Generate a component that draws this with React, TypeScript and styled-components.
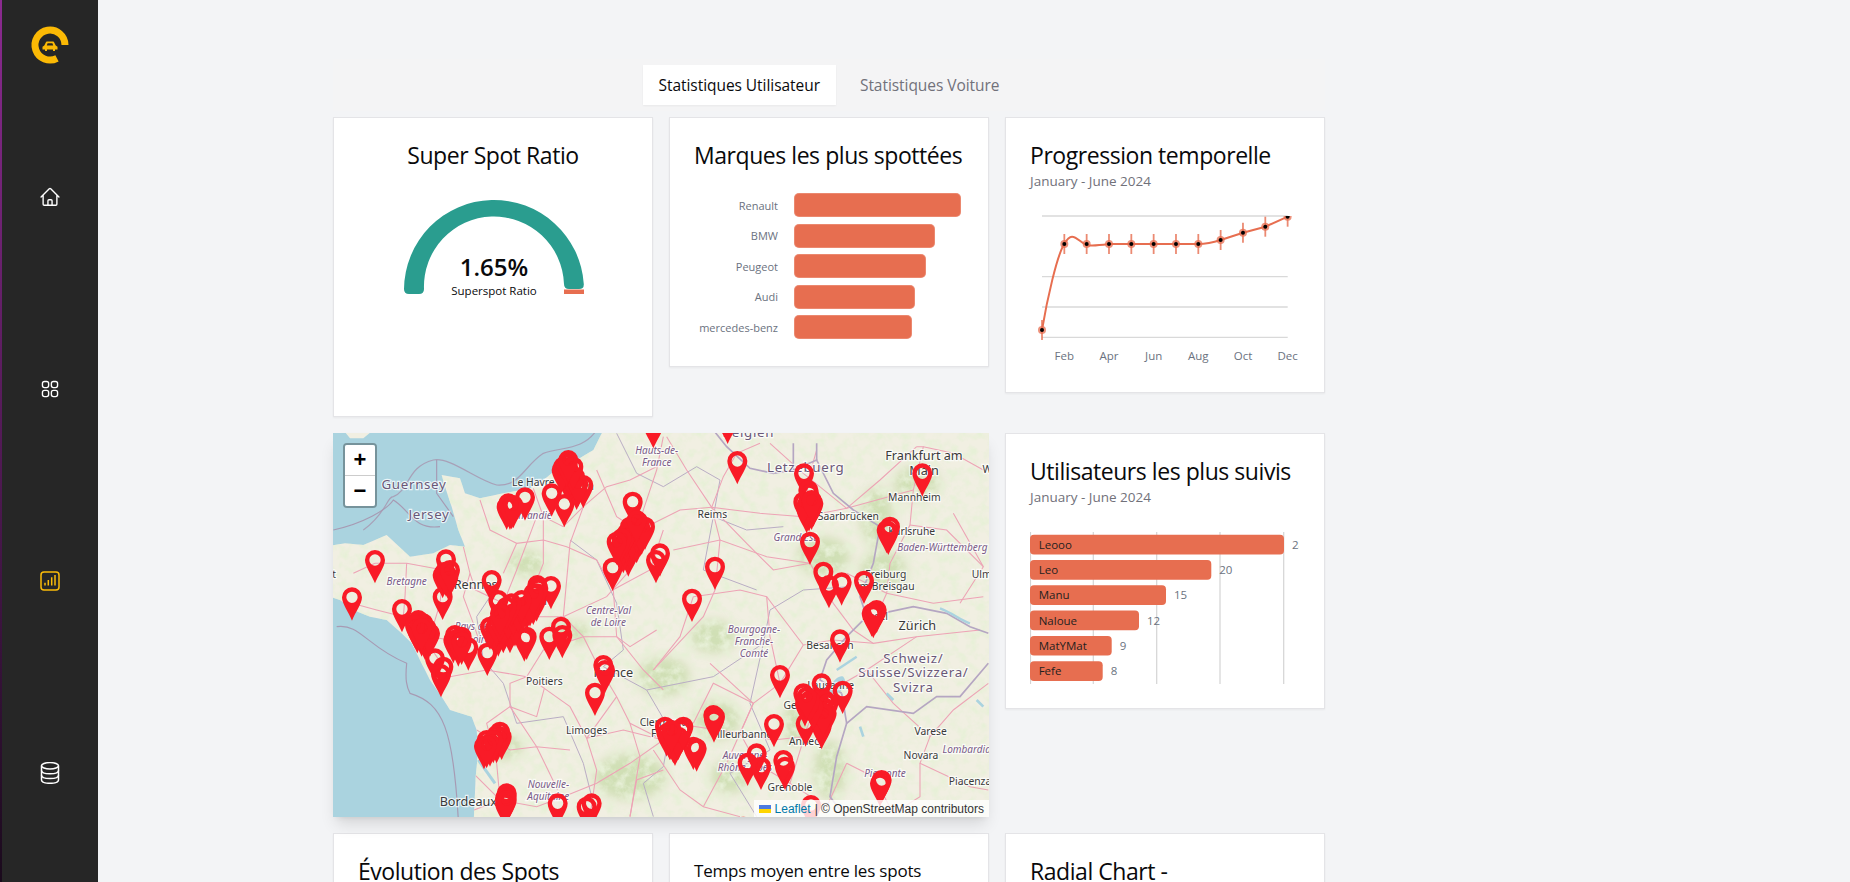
import React from 'react';
import styled, { createGlobalStyle } from 'styled-components';
import { HiOutlineHome, HiOutlineSquares2X2 } from 'react-icons/hi2';

const GlobalStyle = createGlobalStyle`
  html, body {
    margin: 0;
    height: 100%;
    overflow: hidden;
    background: #f3f4f6;
    font-family: "Open Sans", "Noto Sans", sans-serif;
    color: #09090b;
  }
  #root { height: 100%; }
`;

const Page = styled.div`
  display: flex;
  height: 100vh;
  overflow: hidden;
`;

const Sidebar = styled.aside`
  flex: none;
  width: 96px;
  display: flex;
  flex-direction: column;
  align-items: center;
  background: #262626;
  border-left: 2px solid;
  border-image: linear-gradient(#8b2a90, #1a0a1c) 1;
`;

const Logo = styled.svg`
  width: 44px;
  height: 44px;
  margin-top: 23px;
`;

const Nav = styled.nav`
  display: flex;
  flex-direction: column;
  align-items: center;
  gap: 170px;
  margin-top: 119px;
`;

const NavItem = styled.span<{ $active?: boolean }>`
  display: flex;
  width: 22px;
  height: 22px;
  color: ${(p) => (p.$active ? '#fbbc09' : '#ffffff')};
  svg {
    width: 22px;
    height: 22px;
  }
`;

const Main = styled.main`
  flex: 1;
  padding: 59px 0 0 235px;
`;

const Container = styled.div`
  width: 992px;
`;

const TabList = styled.div`
  display: flex;
  justify-content: center;
  gap: 8px;
  padding: 6px;
  margin-bottom: 6px;
  background: #f4f4f5;
`;

const Tab = styled.div<{ $active?: boolean }>`
  padding: 0 16px;
  height: 40px;
  line-height: 40px;
  font-size: 15.5px;
  font-weight: 500;
  letter-spacing: -0.05px;
  color: ${(p) => (p.$active ? '#09090b' : '#71717a')};
  background: ${(p) => (p.$active ? '#ffffff' : 'transparent')};
  box-shadow: ${(p) => (p.$active ? '0 1px 2px rgba(0,0,0,.05)' : 'none')};
`;

const Grid = styled.div`
  display: grid;
  grid-template-columns: repeat(3, 320px);
  gap: 16px;
  align-items: start;
`;

const Card = styled.section<{ $minHeight?: number; $center?: boolean }>`
  box-sizing: border-box;
  min-height: ${(p) => (p.$minHeight ? `${p.$minHeight}px` : 'auto')};
  padding: 24px 24px 22px;
  background: #ffffff;
  border: 1px solid #e4e4e7;
  box-shadow: 0 1px 2px rgba(0, 0, 0, 0.05);
  text-align: ${(p) => (p.$center ? 'center' : 'left')};
`;

const Title = styled.h2<{ $small?: boolean }>`
  margin: -1px 0 1px;
  font-size: ${(p) => (p.$small ? '17px' : '23px')};
  letter-spacing: ${(p) => (p.$small ? '-0.2px' : '-0.45px')};
  line-height: 28px;
  font-weight: 500;
  white-space: nowrap;
`;

const Subtitle = styled.div`
  margin-top: 2px;
  font-size: 13.5px;
  line-height: 20px;
  color: #71717a;
`;

const GaugeSvg = styled.svg`
  display: block;
  margin: 10px auto 0;
`;

const BrandBars = styled.div`
  display: flex;
  flex-direction: column;
  gap: 6.5px;
  margin-top: 24px;
  margin-bottom: 5px;
`;

const BrandRow = styled.div`
  display: flex;
  align-items: center;
  gap: 16px;
`;

const BrandLabel = styled.span`
  width: 84px;
  text-align: right;
  font-size: 11px;
  color: #6b7280;
  white-space: nowrap;
`;

const BrandBar = styled.span<{ $width: number }>`
  width: ${(p) => p.$width}px;
  height: 24px;
  border-radius: 5px;
  background: #e76e50;
  box-shadow: inset 0 0 0 1px rgba(255, 255, 255, 0.18);
`;

const ChartSvg = styled.svg`
  display: block;
  margin-top: 19px;
  overflow: hidden;
`;

const AxisText = styled.text`
  font-size: 11.5px;
  fill: #6b7280;
`;

const MapCard = styled.section`
  position: relative;
  grid-column: span 2;
  height: 384px;
  overflow: hidden;
  background: #aad3df;
  box-shadow: 0 10px 15px -3px rgba(0, 0, 0, 0.12), 0 4px 6px -4px rgba(0, 0, 0, 0.1);
`;

const MapSvg = styled.svg`
  display: block;
`;

const MapLabel = styled.text<{ $kind?: 'city' | 'region' | 'country' | 'big' }>`
  font-family: "Noto Sans", "Open Sans", sans-serif;
  font-size: ${(p) => (p.$kind === 'country' ? 40 : p.$kind === 'big' ? 38 : p.$kind === 'region' ? 30 : 31)}px;
  font-style: ${(p) => (p.$kind === 'region' ? 'italic' : 'normal')};
  letter-spacing: ${(p) => (p.$kind === 'country' ? 2 : 0)}px;
  fill: ${(p) => (p.$kind === 'region' ? '#7a5c88' : p.$kind === 'country' ? '#6a5878' : '#3a3a3a')};
  stroke: rgba(255, 255, 255, 0.75);
  stroke-width: 7px;
  paint-order: stroke;
  text-anchor: middle;
`;

const ZoomControl = styled.div`
  position: absolute;
  top: 10px;
  left: 10px;
  border: 2px solid rgba(0, 0, 0, 0.3);
  border-radius: 4px;
`;

const ZoomButton = styled.div<{ $last?: boolean }>`
  width: 30px;
  height: 30px;
  line-height: 30px;
  text-align: center;
  font-family: "Liberation Sans", Arial, sans-serif;
  font-size: 22px;
  font-weight: 700;
  color: #000;
  background: #fff;
  border-bottom: ${(p) => (p.$last ? 'none' : '1px solid #ccc')};
  border-radius: ${(p) => (p.$last ? '0 0 2px 2px' : '2px 2px 0 0')};
`;

const Attribution = styled.div`
  position: absolute;
  right: 0;
  bottom: 0;
  display: flex;
  align-items: center;
  gap: 4px;
  height: 17px;
  padding: 0 5px;
  font-family: "Liberation Sans", Arial, sans-serif;
  font-size: 12px;
  color: #333;
  background: rgba(255, 255, 255, 0.8);
`;

const LeafletLink = styled.span`
  color: #0078a8;
`;

const CORAL = '#e76e50';

const brands = [
  { name: 'Renault', width: 167 },
  { name: 'BMW', width: 141 },
  { name: 'Peugeot', width: 132 },
  { name: 'Audi', width: 121 },
  { name: 'mercedes-benz', width: 118 },
];

const followed = [
  { name: 'Leooo', end: 254, value: 28 },
  { name: 'Leo', end: 181.3, value: 20 },
  { name: 'Manu', end: 136, value: 15 },
  { name: 'Naloue', end: 109, value: 12 },
  { name: 'MatYMat', end: 81.7, value: 9 },
  { name: 'Fefe', end: 72.7, value: 8 },
];

const progressY = [120, 34, 34, 34, 34, 34, 34, 34, 30, 22.7, 16.7, 6.7];
const progressMonths = ['Feb', 'Apr', 'Jun', 'Aug', 'Oct', 'Dec'];

// pin tips, in crop coordinates of the west and east half of the map
const westPins = [
  [135, 460], [66, 572], [216, 607], [338, 570], [348, 458], [338, 505], [355, 510], [348, 500],
  [485, 520], [505, 580], [270, 660], [275, 680], [285, 690], [262, 670], [290, 675], [315, 755],
  [340, 780], [333, 802], [385, 710], [370, 700], [395, 690], [415, 722], [472, 738], [505, 680],
  [520, 670], [540, 670], [495, 665], [583, 695], [590, 690], [560, 620], [590, 600], [610, 585],
  [620, 575], [622, 535], [663, 538], [658, 690], [697, 685], [693, 660], [530, 640], [555, 650],
  [820, 775], [825, 790], [795, 858], [462, 1018], [500, 1000], [510, 975], [470, 1000], [525, 1190],
  [530, 1170], [683, 1190], [770, 1200], [785, 1190], [970, 55], [848, 483], [978, 460], [908, 285],
  [895, 440], [900, 420], [920, 400], [930, 380], [880, 430], [870, 420], [910, 375], [545, 298],
  [530, 300], [585, 272], [665, 260], [703, 292], [740, 240], [760, 235], [715, 185], [705, 200],
  [720, 220], [1020, 990],
  [280, 650], [270, 650], [265, 640], [290, 665], [300, 680], [255, 655], [275, 665],
  [480, 660], [500, 650], [520, 650], [510, 640], [535, 630], [550, 620], [565, 610], [580, 600],
  [600, 590], [620, 560], [625, 545], [610, 560], [575, 580], [545, 590], [530, 600], [510, 620],
  [700, 180], [720, 200], [735, 210], [745, 230], [695, 190], [710, 170], [730, 180], [715, 160],
  [880, 410], [890, 400], [905, 390], [920, 370], [930, 360], [925, 345], [915, 350], [900, 360],
  [890, 380], [875, 395], [860, 405], [935, 375], [945, 360], [920, 340],
  [540, 300], [535, 290], [550, 295], [500, 985], [515, 990], [480, 1010], [490, 1000], [470, 1015],
  [530, 1160], [525, 1175], [530, 1180], [385, 695], [375, 685], [395, 705], [345, 495], [360, 490],
];

const eastPins = [
  [203, 42], [232, 163], [787, 200], [432, 200], [447, 260], [447, 305], [440, 310], [455, 300],
  [450, 405], [685, 375], [690, 360], [490, 495], [507, 535], [545, 527], [612, 522], [640, 625],
  [645, 615], [165, 480], [96, 576], [540, 698], [360, 805], [485, 830], [548, 852], [435, 890],
  [437, 950], [480, 930], [485, 958], [470, 920], [500, 920], [162, 938], [342, 952], [290, 1040],
  [263, 1068], [303, 1080], [375, 1080], [370, 1060], [660, 1130], [665, 1120], [45, 1008], [30, 990],
  [65, 970], [110, 1025], [100, 1020], [453, 1195], [250, 1260], [0, 440],
  [445, 285], [450, 295], [460, 290], [440, 295], [430, 285], [445, 250], [455, 280],
  [470, 900], [475, 880], [490, 900], [495, 880], [505, 890], [480, 940], [490, 920], [460, 900],
  [450, 880], [430, 860], [440, 870], [20, 980], [40, 1000], [55, 990], [70, 960], [15, 960], [35, 970],
  [680, 370], [650, 610], [635, 620], [165, 930], [160, 925],
];

const westRoads = [
  'M610 175 L640 260 L700 290 L760 230 L830 170 L900 150 L1000 100',
  'M400 350 L420 430 L437 480 L520 520 L600 560 L700 560 L830 500 L900 420 L920 300',
  'M135 400 L230 400 L340 420 L437 480',
  'M66 520 L140 540 L220 560 L300 620 L420 640 L520 620',
  'M300 650 L360 740 L470 720 L590 740 L643 775 L620 860 L540 830 L470 880 L500 1000 L510 1110',
  'M643 775 L720 830 L770 925 L800 1020 L780 1160',
  'M770 925 L880 900 L1000 930',
  'M510 1110 L620 1130 L700 1100 L800 1060 L900 1000 L1000 930',
  'M700 560 L760 620 L800 700 L860 800 L900 880 L980 920',
  'M520 520 L560 420 L620 260',
  'M760 230 L720 340 L700 560',
  'M920 300 L980 120 L1000 20',
  'M540 830 L540 760 L590 740',
  'M850 480 L860 620 L940 720 L1000 780',
  'M380 1160 L510 1110',
  'M900 1160 L920 1050 L1000 1020',
  'M450 210 L480 300 L560 340 L640 330 L710 350 L800 390 L850 480',
  'M640 260 L640 400 L600 500',
  'M420 430 L400 500 L430 580 L450 640',
  'M340 420 L330 520 L300 620',
  'M230 400 L225 500 L220 560',
  'M760 620 L640 660 L590 740',
  'M540 830 L620 950 L683 1080',
  'M860 800 L770 925',
  'M980 600 L900 650 L860 620 L760 620',
  'M1000 300 L960 420 L848 480',
  'M800 120 L860 260 L920 300',
  'M440 900 L540 960 L620 950 L720 960',
  'M900 880 L930 980 L900 1160',
  'M560 340 L520 430',
  'M70 430 L135 400',
  'M400 1000 L510 1110',
];

const eastRoads = [
  'M155 232 L190 140 L230 70 L300 40',
  'M155 232 L60 240 L-60 300',
  'M155 232 L300 250 L430 260 L560 235 L760 180',
  'M430 260 L450 130 L470 60',
  'M155 232 L180 330 L165 480 L130 560 L-20 720',
  'M450 400 L520 520 L580 600 L640 640 L770 620',
  'M760 180 L750 285 L690 400 L680 490 L640 580',
  'M750 285 L860 300 L970 410',
  'M770 50 L790 50 L760 180',
  'M970 120 L880 70 L790 50',
  'M430 645 L320 500 L240 480 L100 500',
  'M430 645 L520 630 L640 640',
  'M430 645 L360 760 L280 820 L240 910 L40 880',
  'M240 910 L340 930 L430 920 L480 800 L620 720 L770 620 L960 600',
  'M240 910 L290 1000 L390 1060 L430 930',
  'M810 920 L780 1000 L930 1070 L985 1080',
  'M780 1000 L780 1100 L700 1150 L640 1040 L560 1000',
  'M810 920 L880 840 L985 760',
  'M-20 960 L60 1080 L130 1130 L240 1160',
  'M620 720 L700 820 L810 920',
  'M20 20 L80 120 L155 232 L260 340 L340 420 L450 400',
  'M330 40 L430 130 L560 235 L660 150 L770 50',
  'M40 360 L180 330 L320 380 L450 400',
  'M100 500 L60 620 L-20 720',
  'M320 500 L330 620 L360 760',
  'M150 700 L280 820 L200 1000 L130 1130',
  'M560 430 L680 490 L820 520 L970 500',
  'M880 250 L970 410 L900 520',
  'M390 1060 L500 1130 L560 1000',
  'M100 880 L160 760 L280 820',
];

const eastBorders = [
  'M160 0 L200 50 L270 115 L340 130 L400 120 L470 90 L520 190 L580 240 L660 290 L640 400 L600 500 L620 560',
  'M400 40 L400 120',
  'M470 40 L470 90',
  'M620 560 L560 620 L500 690 L480 750 L545 790',
  'M620 560 L760 530 L860 550 L930 590 L985 610',
  'M545 790 L560 880 L620 830 L760 850 L830 800 L900 800 L985 700',
  'M560 880 L530 980 L510 1100 L560 1165',
];

const regionBorders = [
  'M860 10 L920 130 L1000 170 L1100 110 L1170 150 L1150 260 L1250 300 L1360 290',
  'M720 330 L800 390 L860 520 L880 660 L820 710 L950 780 L1150 740 L1300 640 L1320 540 L1420 480 L1560 470',
  'M480 500 L440 560 L460 690 L520 760 L560 880 L700 860 L760 1000 L800 1160',
  'M1300 640 L1260 820 L1320 960 L1200 1030 L1280 1160',
  'M950 780 L1020 900 L1000 1010 L940 1060 L970 1160',
  'M1150 260 L1120 420 L1280 480',
];

const greenPatches = [
  [720, 610, 70, 35], [1000, 740, 80, 60], [1150, 620, 70, 50], [1480, 380, 80, 60], [1640, 260, 50, 90],
  [1760, 160, 70, 50], [1160, 870, 70, 60], [1400, 880, 40, 70], [900, 1040, 110, 70], [1200, 1040, 60, 50],
  [1500, 1020, 50, 90], [1660, 420, 70, 60], [590, 400, 60, 40], [520, 950, 60, 40],
];

const westLabels: Array<[string, number, number, 'city' | 'region' | 'country' | 'big']> = [
  ['Guernsey', 252, 176, 'country'],
  ['Jersey', 297, 266, 'country'],
  ['Le Havre', 610, 168, 'city'],
  ['Rouen', 745, 180, 'city'],
  ['Bretagne', 230, 466, 'region'],
  ['Normandie', 590, 266, 'region'],
  ['Rennes', 437, 478, 'big'],
  ['Pays de', 425, 600, 'region'],
  ['la Loire', 430, 638, 'region'],
  ['Tours', 630, 525, 'city'],
  ['Centre-Val', 835, 553, 'region'],
  ['de Loire', 835, 588, 'region'],
  ['Poitiers', 643, 764, 'city'],
  ['France', 850, 742, 'big'],
  ['Limoges', 770, 911, 'city'],
  ['Clermont-', 1002, 888, 'city'],
  ['Ferrand', 1020, 921, 'city'],
  ['Bordeaux', 415, 1128, 'big'],
  ['Nouvelle-', 655, 1075, 'region'],
  ['Aquitaine', 655, 1110, 'region'],
  ['Hauts-de-', 980, 72, 'region'],
  ['France', 980, 108, 'region'],
  ['Brest', -20, 443, 'city'],
];

const eastLabels: Array<[string, number, number, 'city' | 'region' | 'country' | 'big']> = [
  ['Belgien', 265, 20, 'country'],
  ['Frankfurt am', 792, 90, 'big'],
  ['Main', 792, 136, 'big'],
  ['Würzburg', 1040, 130, 'city'],
  ['Mannheim', 763, 214, 'city'],
  ['Letzebuerg', 437, 126, 'country'],
  ['Saarbrücken', 565, 270, 'city'],
  ['Karlsruhe', 755, 316, 'city'],
  ['Reims', 157, 263, 'city'],
  ['Baden-Württemberg', 847, 362, 'region'],
  ['Grand Est', 405, 333, 'region'],
  ['Freiburg', 677, 444, 'city'],
  ['im Breisgau', 677, 479, 'city'],
  ['Ulm', 965, 443, 'city'],
  ['Zürich', 772, 600, 'big'],
  ['Basel', 645, 569, 'city'],
  ['Besançon', 510, 656, 'city'],
  ['Bourgogne-', 282, 610, 'region'],
  ['Franche-', 282, 645, 'region'],
  ['Comté', 282, 680, 'region'],
  ['Schweiz/', 760, 699, 'country'],
  ['Suisse/Svizzera/', 760, 742, 'country'],
  ['Svizra', 760, 787, 'country'],
  ['Lausanne', 512, 776, 'city'],
  ['Genève', 425, 838, 'city'],
  ['Annecy', 440, 946, 'city'],
  ['Villeurbanne', 245, 923, 'city'],
  ['Auvergne-', 255, 987, 'region'],
  ['Rhône-Alpes', 255, 1022, 'region'],
  ['Grenoble', 390, 1084, 'city'],
  ['Varese', 812, 914, 'city'],
  ['Novara', 783, 986, 'city'],
  ['Lombardia', 920, 968, 'region'],
  ['Piacenza', 930, 1064, 'city'],
  ['Piemonte', 675, 1042, 'region'],
];

const PIN =
  'M0 0 C-10 -25 -30 -50 -30 -70 A30 30 0 1 1 30 -70 C30 -50 10 -25 0 0 Z M0 -87 A17 17 0 1 0 0 -53 A17 17 0 1 0 0 -87 Z';

function FranceMap() {
  return (
    <MapSvg width="656" height="384" viewBox="0 0 656 384">
      <defs>
        <clipPath id="land">
          <path d="M430 1200 L437 1040 L445 960 L440 900 L425 860 L360 840 L335 800 L300 750 L270 690 L245 640 L215 610 L170 570 L120 560 L70 540 L30 510 L0 500 L-20 500 L-20 350 L45 340 L100 345 L170 315 L240 380 L310 370 L360 345 L405 350 L385 300 L365 230 L345 170 L335 135 L390 145 L405 190 L450 205 L520 190 L600 175 L640 150 L690 110 L740 90 L790 60 L830 -20 L2100 -20 L2100 1200 Z" />
        </clipPath>
        <filter id="terrain" x="0" y="0" width="100%" height="100%">
          <feTurbulence type="fractalNoise" baseFrequency="0.035" numOctaves="4" seed="7" />
          <feColorMatrix values="0 0 0 0 0.8  0 0 0 0 0.87  0 0 0 0 0.68  2.6 0 0 0 -1.05" />
        </filter>
        <filter id="soft">
          <feGaussianBlur stdDeviation="18" />
        </filter>
        <path id="pin" d={PIN} fillRule="evenodd" fill="#f91b27" />
      </defs>
      <g transform="translate(-3,-3) scale(0.33333)">
        <path d="M-20 0 L40 0 L60 25 L100 25 L130 0 Z" fill="#f1efe2" />
        <path d="M100 300 C170 250 170 200 190 200 C240 180 230 110 310 90 C360 80 440 150 500 165 C570 170 580 110 640 70 C700 50 760 60 800 0" fill="none" stroke="#a79ab3" strokeWidth="3.5" opacity="0.9" />
        <path d="M10 300 C100 280 170 240 190 210 C240 240 250 300 330 290 M320 90 L320 190 L370 260" fill="none" stroke="#a79ab3" strokeWidth="3.5" />
        <path d="M20 590 C90 580 110 650 230 700 C225 750 230 770 240 790 C340 820 370 900 385 1170" fill="none" stroke="#a79ab3" strokeWidth="3.5" />
        <g clipPath="url(#land)">
          <rect x="-20" y="-20" width="2120" height="1220" fill="#f1efe2" />
          <g filter="url(#soft)" fill="#c5daa6" opacity="0.75">
            {greenPatches.map(([cx, cy, rx, ry]) => (
              <ellipse key={`${cx}-${cy}`} cx={cx} cy={cy} rx={rx} ry={ry} />
            ))}
          </g>
          <rect x="-20" y="-20" width="2120" height="1220" filter="url(#terrain)" />
          <g fill="none" stroke="#b9adc4" strokeWidth="3">
            {regionBorders.map((d) => (
              <path key={d} d={d} />
            ))}
          </g>
          <g fill="none" stroke="#eda3b5" strokeWidth="3.2">
            {westRoads.map((d) => (
              <path key={d} d={d} />
            ))}
          </g>
          <path d="M445 990 L495 1060" stroke="#aad3df" strokeWidth="9" />
          <g transform="translate(990,0)">
            <g fill="none" stroke="#eda3b5" strokeWidth="3.2">
              {eastRoads.map((d) => (
                <path key={d} d={d} />
              ))}
            </g>
            <g fill="none" stroke="#b5a6c2" strokeWidth="5">
              {eastBorders.map((d) => (
                <path key={d} d={d} />
              ))}
            </g>
            <path d="M500 800 C540 790 570 770 550 740 C530 730 500 780 500 800 Z" fill="#aad3df" />
            <path d="M530 720 L590 680" stroke="#aad3df" strokeWidth="7" />
            <path d="M840 535 C880 550 900 570 930 580" fill="none" stroke="#aad3df" strokeWidth="7" />
            <path d="M680 790 L700 810 M600 890 L610 920 M950 810 L970 830" stroke="#aad3df" strokeWidth="8" />
          </g>
        </g>
        <g>
          {westLabels.map(([text, x, y, kind]) => (
            <MapLabel key={`${text}-${y}`} x={x} y={y} $kind={kind}>
              {text}
            </MapLabel>
          ))}
        </g>
        <g transform="translate(990,0)">
          {eastLabels.map(([text, x, y, kind]) => (
            <MapLabel key={`${text}-${y}`} x={x} y={y} $kind={kind}>
              {text}
            </MapLabel>
          ))}
        </g>
        {westPins.map(([x, y], i) => (
          <use key={i} href="#pin" x={x} y={y} />
        ))}
        {eastPins.map(([x, y], i) => (
          <use key={i} href="#pin" x={x + 990} y={y} />
        ))}
      </g>
    </MapSvg>
  );
}

function Gauge() {
  return (
    <GaugeSvg width="272" height="135" viewBox="357 176 272 135">
      <rect x="563" y="286.5" width="20" height="4.5" fill={CORAL} />
      <path
        d="M408 291 Q403 291 403 286 A90 90 0 0 1 582.8 281 Q583 286 578 286 L568 286 Q563 286 563 281 A70 70 0 0 0 423 286 Q423 291 418 291 Z"
        fill="#2a9d8f"
      />
      <text x="493" y="273" textAnchor="middle" fontSize="24" fontWeight="600" fill="#09090b">
        1.65%
      </text>
      <text x="493" y="292" textAnchor="middle" fontSize="11.5" fill="#09090b">
        Superspot Ratio
      </text>
    </GaugeSvg>
  );
}

function ProgressChart() {
  const xs = progressY.map((_, i) => 12 + i * 22.33);
  return (
    <ChartSvg width="271" height="160" viewBox="0 0 271 160">
      <defs>
        <clipPath id="plot">
          <rect x="0" y="6" width="271" height="154" />
        </clipPath>
      </defs>
      {[6, 66.7, 97, 127.3].map((y) => (
        <line key={y} x1="12" x2="257.7" y1={y} y2={y} stroke="#d9d9d9" strokeWidth="1.3" />
      ))}
      <g clipPath="url(#plot)">
        {xs.map((x, i) => (
          <line key={x} x1={x} x2={x} y1={progressY[i] - 10} y2={progressY[i] + 10} stroke={CORAL} strokeWidth="1.8" opacity="0.8" />
        ))}
        <path
          d="M12 120 C17 90 27 45 34.3 34 C37 29 40 26.7 42 26.7 C47 26.7 51 33 56.7 35 C62 36.5 72 35 79 34 L168.3 34 C176 34 183 32.5 190.7 30 L213 22.7 L235.3 16.7 L257.7 6.7"
          fill="none"
          stroke={CORAL}
          strokeWidth="2"
        />
        {xs.map((x, i) => (
          <g key={x}>
            <circle cx={x} cy={progressY[i]} r="4" fill={CORAL} opacity="0.75" />
            <circle cx={x} cy={progressY[i]} r="2" fill="#000" />
          </g>
        ))}
      </g>
      {progressMonths.map((m, i) => (
        <AxisText key={m} x={xs[i * 2 + 1]} y={150} textAnchor="middle">
          {m}
        </AxisText>
      ))}
    </ChartSvg>
  );
}

function FollowedChart() {
  return (
    <ChartSvg width="269" height="160" viewBox="0 0 269 160">
      {[0.5, 63.3, 126.7, 190, 253.7].map((x) => (
        <line key={x} x1={x} x2={x} y1="6" y2="158" stroke="#d4d4d4" strokeWidth="1.2" />
      ))}
      {followed.map((u, i) => {
        const y = 8.7 + i * 25.3;
        return (
          <g key={u.name}>
            <rect x="0" y={y} width={u.end} height="19.7" rx="4" fill={CORAL} />
            <text x="8.7" y={y + 14} fontSize="11.5" fill="#1f1f1f">
              {u.name}
            </text>
            <AxisText x={u.end + 8} y={y + 14}>
              {u.value}
            </AxisText>
          </g>
        );
      })}
    </ChartSvg>
  );
}

export default function App() {
  return (
    <Page>
      <GlobalStyle />
      <Sidebar>
        <Logo viewBox="28 23 44 44">
          <path d="M65 45 A15 15 0 1 0 57 58.3" fill="none" stroke="#fbb905" strokeWidth="7" />
          <path
            d="M42.5 49.5 V46.8 L44.3 45.6 L45.8 42.4 Q46 41.6 47 41.6 H53 Q54 41.6 54.2 42.4 L55.7 45.6 L57.5 46.8 V49.5 H55 V51 H53 V49.5 H47 V51 H45 V49.5 Z M46.8 45.4 H53.2 L52.4 43.2 H47.6 Z"
            fill="#fbb905"
            fillRule="evenodd"
          />
        </Logo>
        <Nav>
          <NavItem>
            <HiOutlineHome />
          </NavItem>
          <NavItem>
            <HiOutlineSquares2X2 />
          </NavItem>
          <NavItem $active>
            <svg viewBox="0 0 22 22" fill="none" stroke="currentColor">
              <rect x="2" y="2" width="18" height="18" rx="3" strokeWidth="1.5" />
              <path d="M6 15.5 V12.7 M9.3 15.5 V10 M12.7 15.5 V7.3 M16 15.5 V5" strokeWidth="1.5" />
            </svg>
          </NavItem>
          <NavItem>
            <svg viewBox="0 0 22 22" fill="none" stroke="currentColor" strokeWidth="1.5">
              <ellipse cx="11" cy="3.8" rx="8.5" ry="3.2" />
              <path d="M2.5 3.8 V18 C2.5 20 6.3 21.3 11 21.3 S19.5 20 19.5 18 V3.8" />
              <path d="M2.5 8.5 C2.5 10.5 6.3 11.8 11 11.8 S19.5 10.5 19.5 8.5" />
              <path d="M2.5 13.2 C2.5 15.2 6.3 16.5 11 16.5 S19.5 15.2 19.5 13.2" />
            </svg>
          </NavItem>
        </Nav>
      </Sidebar>
      <Main>
        <Container>
          <TabList>
            <Tab $active>Statistiques Utilisateur</Tab>
            <Tab>Statistiques Voiture</Tab>
          </TabList>
          <Grid>
            <Card $minHeight={300} $center>
              <Title>Super Spot Ratio</Title>
              <Gauge />
            </Card>
            <Card>
              <Title>Marques les plus spottées</Title>
              <BrandBars>
                {brands.map((b) => (
                  <BrandRow key={b.name}>
                    <BrandLabel>{b.name}</BrandLabel>
                    <BrandBar $width={b.width} />
                  </BrandRow>
                ))}
              </BrandBars>
            </Card>
            <Card>
              <Title>Progression temporelle</Title>
              <Subtitle>January - June 2024</Subtitle>
              <ProgressChart />
            </Card>
            <MapCard>
              <FranceMap />
              <ZoomControl>
                <ZoomButton>+</ZoomButton>
                <ZoomButton $last>−</ZoomButton>
              </ZoomControl>
              <Attribution>
                <svg width="12" height="8" viewBox="0 0 12 8">
                  <rect width="12" height="4" fill="#4c7be1" />
                  <rect y="4" width="12" height="4" fill="#ffd500" />
                </svg>
                <LeafletLink>Leaflet</LeafletLink>
                <span>| © OpenStreetMap contributors</span>
              </Attribution>
            </MapCard>
            <Card>
              <Title>Utilisateurs les plus suivis</Title>
              <Subtitle>January - June 2024</Subtitle>
              <FollowedChart />
            </Card>
            <Card>
              <Title>Évolution des Spots</Title>
            </Card>
            <Card>
              <Title $small>Temps moyen entre les spots</Title>
            </Card>
            <Card>
              <Title>Radial Chart -</Title>
            </Card>
          </Grid>
        </Container>
      </Main>
    </Page>
  );
}
